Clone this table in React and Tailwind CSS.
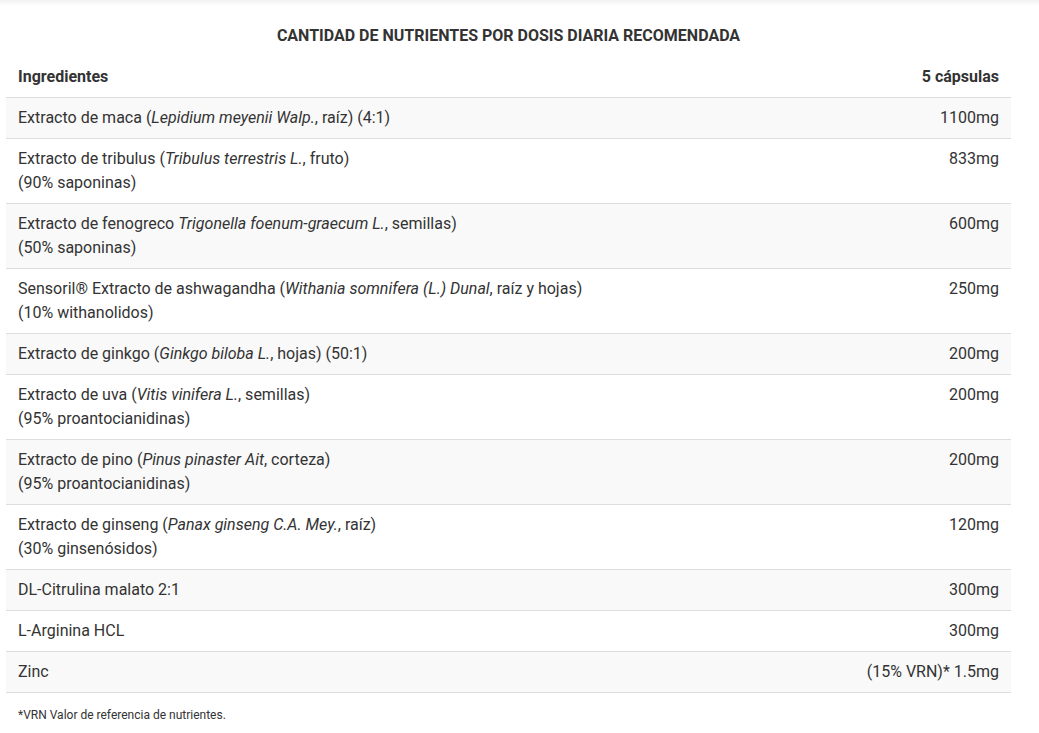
const rows = [
  { name: <>Extracto de maca (<em>Lepidium meyenii Walp.</em>, raíz) (4:1)</>, qty: '1100mg' },
  { name: <>Extracto de tribulus (<em>Tribulus terrestris L.</em>, fruto)<br />(90% saponinas)</>, qty: '833mg' },
  { name: <>Extracto de fenogreco <em>Trigonella foenum-graecum L.</em>, semillas)<br />(50% saponinas)</>, qty: '600mg' },
  { name: <>Sensoril® Extracto de ashwagandha (<em>Withania somnifera (L.) Dunal</em>, raíz y hojas)<br />(10% withanolidos)</>, qty: '250mg' },
  { name: <>Extracto de ginkgo (<em>Ginkgo biloba L.</em>, hojas) (50:1)</>, qty: '200mg' },
  { name: <>Extracto de uva (<em>Vitis vinifera L.</em>, semillas)<br />(95% proantocianidinas)</>, qty: '200mg' },
  { name: <>Extracto de pino (<em>Pinus pinaster Ait</em>, corteza)<br />(95% proantocianidinas)</>, qty: '200mg' },
  { name: <>Extracto de ginseng (<em>Panax ginseng C.A. Mey.</em>, raíz)<br />(30% ginsenósidos)</>, qty: '120mg' },
  { name: <>DL-Citrulina malato 2:1</>, qty: '300mg' },
  { name: <>L-Arginina HCL</>, qty: '300mg' },
  { name: <>Zinc</>, qty: '(15% VRN)* 1.5mg' },
];

export default function App() {
  return (
    <div className="min-h-screen bg-white text-[#333] font-['Roboto',sans-serif]">
      <div className="h-[6px] bg-gradient-to-b from-[#f2f2f2] to-white" />
      <div className="w-[1005px] ml-[6px]">
        <h2 className="text-center text-[16px] font-bold leading-[20px] mt-[20px] mb-[11px]">
          CANTIDAD DE NUTRIENTES POR DOSIS DIARIA RECOMENDADA
        </h2>
        <table className="w-full border-collapse text-[16px] leading-[24px]">
          <thead>
            <tr className="border-b border-[#ddd]">
              <th className="text-left font-bold px-3 py-2">Ingredientes</th>
              <th className="text-right font-bold px-3 py-2">5 cápsulas</th>
            </tr>
          </thead>
          <tbody>
            {rows.map((r, i) => (
              <tr key={i} className={`border-b border-[#ddd] ${i % 2 === 0 ? 'bg-[#f9f9f9]' : 'bg-white'}`}>
                <td className="px-3 py-2 align-top">{r.name}</td>
                <td className="px-3 py-2 align-top text-right whitespace-nowrap">{r.qty}</td>
              </tr>
            ))}
          </tbody>
        </table>
        <p className="text-[12px] leading-[18px] mt-[13px] pl-3">*VRN Valor de referencia de nutrientes.</p>
      </div>
    </div>
  );
}
